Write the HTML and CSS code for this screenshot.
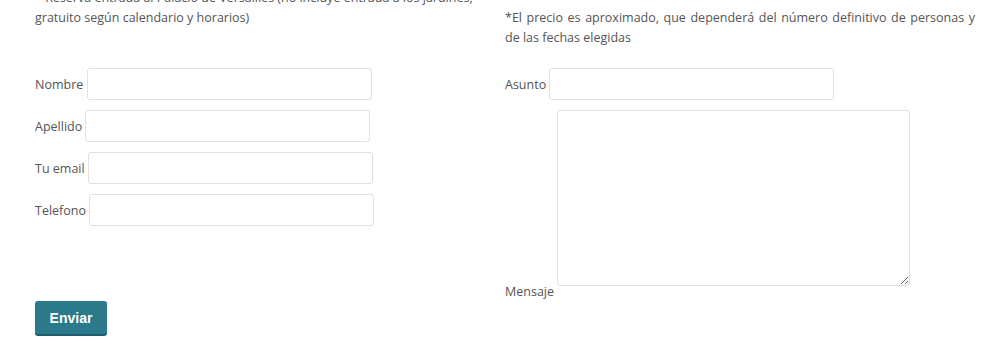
FILE: index.html
```html
<!DOCTYPE html>
<html lang="es">
<head>
  <meta charset="UTF-8" />
  <meta name="viewport" content="width=device-width, initial-scale=1.0"/>
  <title>Reserva</title>
  <link rel="stylesheet" href="styles.css">
</head>
<body>

  <div class="notas">
    <p class="nota nota-izq">* Reserva entrada al Palacio de Versailles (no incluye entrada a los jardines, gratuito según calendario y horarios)</p>
    <p class="nota nota-der">*El precio es aproximado, que dependerá del número definitivo de personas y de las fechas elegidas</p>
  </div>

  <form class="formulario" onsubmit="return false;">
    <div class="columna">
      <div class="campo"><label for="nombre">Nombre</label> <input type="text" id="nombre"></div>
      <div class="campo"><label for="apellido">Apellido</label> <input type="text" id="apellido"></div>
      <div class="campo"><label for="email">Tu email</label> <input type="email" id="email"></div>
      <div class="campo"><label for="telefono">Telefono</label> <input type="text" id="telefono"></div>
    </div>
    <div class="columna">
      <div class="campo"><label for="asunto">Asunto</label> <input type="text" id="asunto"></div>
      <div class="campo"><label for="mensaje">Mensaje</label> <textarea id="mensaje"></textarea></div>
    </div>
    <div class="acciones">
      <button type="submit" class="btn-enviar">Enviar</button>
    </div>
  </form>

</body>
</html>
```

FILE: styles.css
```css
body {
  margin: 0; padding: 0;
  font-family: 'Open Sans', sans-serif;
  font-size: 12.5px;
  line-height: 20px;
  background: #fff; color: #555;
  overflow: hidden;
}

.notas {
  display: grid;
  grid-template-columns: 470px 470px;
  padding-left: 35px;
  margin-top: 8px;
}

.nota {
  margin: 0;
}

.nota-izq {
  margin-top: -20px;
  padding-right: 6px;
}

.nota-der {
  text-align: justify;
}

.formulario {
  display: grid;
  grid-template-columns: 470px 470px;
  padding-left: 35px;
  margin-top: 20px;
}

.campo {
  margin: 0;
}

.campo label {
  color: #555;
}

.campo input,
.campo textarea {
  box-sizing: border-box;
  width: 285px;
  height: 32px;
  margin: 0 0 10px;
  padding: 4px 6px;
  border: 1px solid #e1e1e1;
  border-radius: 3px;
  background: #fff;
  font-family: inherit;
  font-size: 13px;
  color: #555;
  vertical-align: baseline;
}

.campo textarea {
  width: 353px;
  height: 176px;
  resize: vertical;
}

.acciones {
  grid-column: 1 / 3;
}

.btn-enviar {
  width: 72px;
  height: 35px;
  margin-top: -1px;
  padding: 0;
  border: none;
  border-bottom: 2px solid #1f5d6c;
  border-radius: 3px;
  background: #2b7a8c;
  color: #fff;
  font-family: 'Liberation Sans', Arial, sans-serif;
  font-weight: bold;
  font-size: 14px;
  cursor: pointer;
}
```
